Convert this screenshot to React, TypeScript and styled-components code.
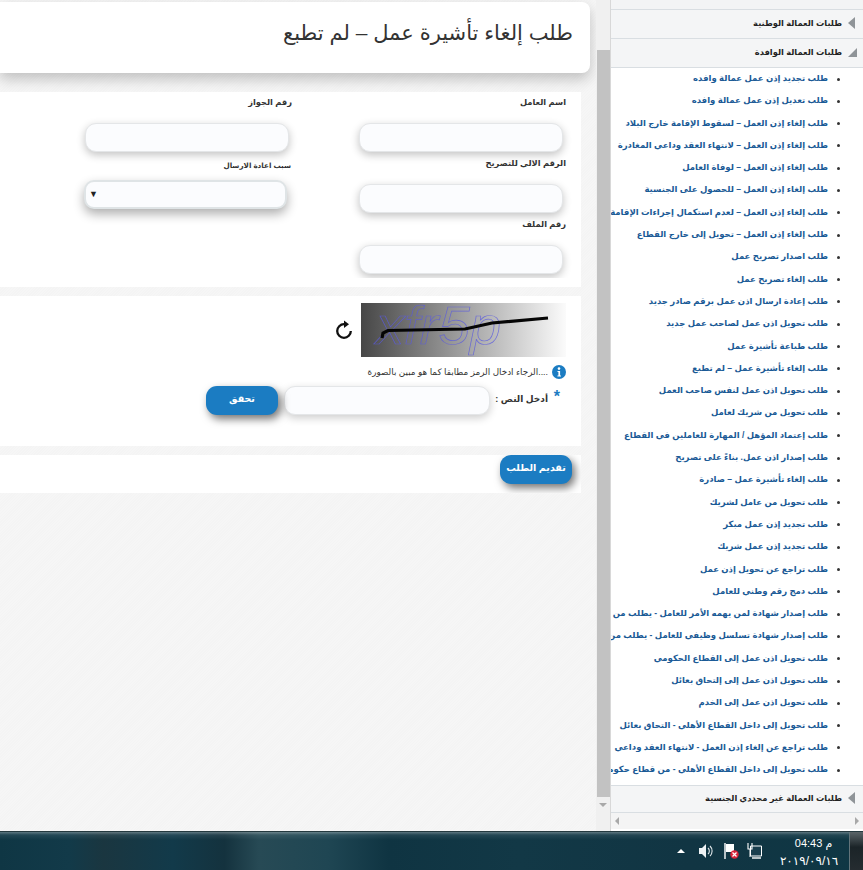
import React from "react";
import styled, { createGlobalStyle } from "styled-components";

const Global = createGlobalStyle`
  html, body { margin: 0; padding: 0; height: 100%; overflow: hidden; }
  body { font-family: "Liberation Sans", "DejaVu Sans", sans-serif; background: #f6f6f6; }
  * { box-sizing: border-box; }
`;

const Screen = styled.div`
  width: 863px; height: 870px; display: flex; flex-direction: column; overflow: hidden;
`;
const Workspace = styled.div`
  height: 831px; display: flex; flex-direction: row;
`;
const Content = styled.main`
  width: 596px; height: 831px; direction: rtl; padding: 2px 0 0 0; overflow: hidden;
  background: repeating-linear-gradient(135deg, #f6f6f6 0 1px, #f4f4f4 1px 2px);
`;
const TitleCard = styled.header`
  width: 590px; height: 71px; background: #fff; border-radius: 0 8px 8px 0;
  margin-inline-start: 6px; padding: 16px 17px 0 0;
  box-shadow: 0 6px 14px rgba(0,0,0,.22);
`;
const Title = styled.h1`
  margin: 0; font-size: 21px; line-height: 30px; font-weight: 400; color: #333;
`;
const Section = styled.section<{ $top: number; $height: number }>`
  width: 581px; margin-inline-start: 15px; margin-top: ${p => p.$top}px; height: ${p => p.$height}px;
  background: #fff; position: relative; overflow: hidden;
`;
const FormClip = styled.div`
  height: 186px; overflow: hidden; display: flex; flex-direction: row; padding: 0 15px 0 0;
`;
const Column = styled.div`
  width: 274px; flex: none; display: flex; flex-direction: column; padding-top: 3px;
`;
const Field = styled.div`
  height: 61.5px; display: flex; flex-direction: column;
`;
const Label = styled.label`
  display: block; height: 28px; font-size: 8.3px; font-weight: 700; line-height: 13px; color: #333;
  padding-top: 1px;
`;
const TextInput = styled.div`
  width: 204px; height: 29px; margin-inline-start: 3px; flex: none; background: #fbfcfe;
  border: 1px solid #e4e6e8; border-radius: 11px; box-shadow: 0 3px 8px rgba(0,0,0,.24);
`;
const SelectRow = styled.div`
  height: 60px; display: flex; flex-direction: column;
`;
const SmallLabel = styled.label`
  display: block; height: 23.5px; font-size: 7.2px; font-weight: 700; line-height: 13px; color: #333;
  padding: 2.5px 1px 0 0;
`;
const SelectBox = styled.div`
  width: 203px; height: 29px; margin-right: 5px; direction: ltr; background: #fbfcfe; border: 2px solid #dfe4e6;
  border-radius: 10px; box-shadow: 0 5px 11px rgba(0,0,0,.32); font-size: 9px; color: #222; padding: 5px 0 0 3px; line-height: 14px;
`;
const CaptchaBlock = styled.div`
  padding: 7px 15px 0 0; display: flex; flex-direction: column; align-items: flex-start;
`;
const CaptchaRow = styled.div`
  display: flex; align-items: center; gap: 8px; height: 54px;
`;
const CaptchaImage = styled.svg`
  width: 205px; height: 54px; display: block; direction: ltr;
`;
const RefreshIcon = styled.svg`
  width: 18px; height: 20px; flex: none;
`;
const InfoRow = styled.div`
  display: flex; align-items: center; gap: 4px; margin-top: 7px; height: 16px; font-size: 8.8px; color: #333;
`;
const InfoIcon = styled.svg`
  width: 14px; height: 14px; flex: none;
`;
const VerifyRow = styled.div`
  display: flex; align-items: flex-start; margin-top: 6px; height: 30px;
`;
const Star = styled.span`
  color: #1d7cc3; font-size: 16px; font-weight: 700; width: 8px; line-height: 22px; margin-inline: 6px 4px;
`;
const VerifyLabel = styled.span`
  font-size: 9px; font-weight: 700; color: #333; line-height: 15px; padding-top: 6px; width: 58px; white-space: nowrap; height: 22px;
`;
const VerifyInput = styled.div`
  width: 206px; height: 29px; background: #fbfcfe; border: 1px solid #e4e6e8; border-radius: 11px;
  box-shadow: 0 3px 9px rgba(0,0,0,.2);
`;
const BlueButton = styled.div<{ $w: number }>`
  width: ${p => p.$w}px; height: 29px; background: #1b7cc2; color: #fff; font-size: 9.5px; font-weight: 700; border-radius: 11px;
  text-align: center; line-height: 26px; box-shadow: 3px 4px 8px rgba(0,0,0,.55);
`;
const SubmitWrap = styled.div`
  padding-inline-start: 9px; height: 29px;
`;
const VerifyButton = styled(BlueButton)`
  margin-inline-start: 6px;
`;
const ScrollBar = styled.div`
  width: 15px; height: 831px; background: #f0f0f0; display: flex; flex-direction: column; border-right: 1px solid #d8d8d8;
  padding-top: 50px; align-items: center;
`;
const Thumb = styled.div`
  width: 13px; height: 747px; background: #c2c2c2;
`;
const DownArrow = styled.div`
  margin-top: 6px; width: 0; height: 0; border-left: 4px solid transparent; border-right: 4px solid transparent; border-top: 4px solid #a8a8a8;
`;
const Sidebar = styled.aside`
  width: 252px; height: 831px; background: #fff; direction: rtl; display: flex; flex-direction: column; overflow: hidden;
`;
const TopStub = styled.div`
  height: 10px; background: #f3f4f5; border-bottom: 1px solid #d9dee2;
`;
const AccordionHead = styled.div<{ $h: number }>`
  height: ${p => p.$h}px; flex: none; background: #f4f5f6; border-bottom: 1px solid #d9dee2; display: flex; align-items: center;
  padding: 0 6px 3px 0; gap: 5px; font-size: 8.3px; font-weight: 700; color: #222;
`;
const Triangle = styled.svg`
  width: 10px; height: 14px; flex: none;
`;
const List = styled.ul`
  flex: none; height: 718px; margin: 0; padding: 0 35px 0 0; list-style: none; overflow: hidden; border-bottom: 1px solid #d9dee2;
`;
const Item = styled.li`
  position: relative; height: 22.3px; line-height: 20.3px; white-space: nowrap; font-size: 8.5px; font-weight: 700; color: #1a5a96;
  &::before { content: ""; position: absolute; right: -12px; top: 9.5px; width: 3px; height: 3px; border-radius: 50%; background: #333; }
`;
const HScroll = styled.div`
  height: 16px; flex: none; background: #f4f4f4; display: flex; direction: ltr; align-items: center; justify-content: space-between; padding: 0 4px;
`;
const ArrowL = styled.div`
  width: 0; height: 0; border-top: 4px solid transparent; border-bottom: 4px solid transparent; border-right: 4px solid #a8a8a8;
`;
const ArrowR = styled.div`
  width: 0; height: 0; border-top: 4px solid transparent; border-bottom: 4px solid transparent; border-left: 4px solid #a8a8a8;
`;
const Taskbar = styled.footer`
  height: 39px; display: flex; justify-content: flex-end; align-items: center;
  border-top: 1px solid #24393f;
  background:
    linear-gradient(180deg, rgba(255,255,255,.32) 0, rgba(255,255,255,.08) 3px, rgba(255,255,255,0) 8px),
    linear-gradient(90deg, #0f3644 0, #123a49 8%, #1a3640 12%, #123a4a 20%, #14323e 26%, #274a55 30%, #1f4653 38%, #0f3442 45%, #123846 60%, #113543 80%, #0f3744 100%);
`;
const Tray = styled.div`
  display: flex; align-items: center; color: #fff; height: 38px;
`;
const TrayGlyph = styled.svg<{ $w: number; $m: number }>`
  width: ${p => p.$w}px; height: 20px; margin-right: ${p => p.$m}px; flex: none;
`;
const Clock = styled.div`
  width: 85px; color: #fff; text-align: center; padding: 3px 0 0 5px; direction: ltr;
`;
const ClockTime = styled.div`
  font-size: 11px; line-height: 17px; padding-left: 9px;
`;
const ClockDate = styled.div`
  font-size: 12px; line-height: 18px;
`;
const ShowDesktop = styled.div`
  width: 14px; height: 38px; border-left: 1px solid #62747a;
  background: linear-gradient(180deg, #5a6468, #1b2428 40%, #252c30);
`;

const items = [
  "طلب تجديد إذن عمل عمالة وافده",
  "طلب تعديل إذن عمل عمالة وافده",
  "طلب إلغاء إذن العمل – لسقوط الإقامة خارج البلاد",
  "طلب إلغاء إذن العمل – لانتهاء العقد وداعي المغادرة",
  "طلب إلغاء إذن العمل – لوفاة العامل",
  "طلب إلغاء إذن العمل – للحصول على الجنسية",
  "طلب إلغاء إذن العمل – لعدم استكمال إجراءات الإقامة",
  "طلب إلغاء إذن العمل – تحويل إلى خارج القطاع",
  "طلب اصدار تصريح عمل",
  "طلب إلغاء تصريح عمل",
  "طلب إعادة ارسال اذن عمل برقم صادر جديد",
  "طلب تحويل اذن عمل لصاحب عمل جديد",
  "طلب طباعة تأشيرة عمل",
  "طلب إلغاء تأشيرة عمل – لم تطبع",
  "طلب تحويل اذن عمل لنفس صاحب العمل",
  "طلب تحويل من شريك لعامل",
  "طلب إعتماد المؤهل / المهارة للعاملين في القطاع",
  "طلب إصدار اذن عمل. بناءً على تصريح",
  "طلب إلغاء تأشيرة عمل – صادرة",
  "طلب تحويل من عامل لشريك",
  "طلب تجديد إذن عمل مبكر",
  "طلب تجديد إذن عمل شريك",
  "طلب تراجع عن تحويل إذن عمل",
  "طلب دمج رقم وطني للعامل",
  "طلب إصدار شهادة لمن يهمه الأمر للعامل - يطلب من",
  "طلب إصدار شهادة تسلسل وظيفي للعامل - يطلب من",
  "طلب تحويل اذن عمل إلى القطاع الحكومي",
  "طلب تحويل اذن عمل إلى إلتحاق بعائل",
  "طلب تحويل اذن عمل إلى الخدم",
  "طلب تحويل إلى داخل القطاع الأهلي - التحاق بعائل",
  "طلب تراجع عن إلغاء إذن العمل - لانتهاء العقد وداعي",
  "طلب تحويل إلى داخل القطاع الأهلي - من قطاع حكومي",
];

const Collapsed = () => (
  <Triangle viewBox="0 0 10 14"><path d="M8 1v12L1 7z" fill="#8f9498" /></Triangle>
);
const Open = () => (
  <Triangle viewBox="0 0 10 14"><path d="M10 3v9H1z" fill="#8f9498" /></Triangle>
);

export default function App() {
  return (
    <Screen>
      <Global />
      <Workspace>
        <Content>
          <TitleCard>
            <Title>طلب إلغاء تأشيرة عمل – لم تطبع</Title>
          </TitleCard>
          <Section $top={19} $height={195}>
            <FormClip>
              <Column>
                <Field><Label>اسم العامل</Label><TextInput /></Field>
                <Field><Label>الرقم الالي للتصريح</Label><TextInput /></Field>
                <Field><Label>رقم الملف</Label><TextInput /></Field>
              </Column>
              <Column>
                <Field><Label>رقم الجواز</Label><TextInput /></Field>
                <SelectRow>
                  <SmallLabel>سبب اعادة الارسال</SmallLabel>
                  <SelectBox>▼</SelectBox>
                </SelectRow>
              </Column>
            </FormClip>
          </Section>
          <Section $top={9} $height={150}>
            <CaptchaBlock>
              <CaptchaRow>
                <CaptchaImage viewBox="0 0 205 54">
                  <defs>
                    <linearGradient id="cg" x1="0" x2="1" y1="0" y2="0">
                      <stop offset="0" stopColor="#474747" />
                      <stop offset="1" stopColor="#fbfbfb" />
                    </linearGradient>
                  </defs>
                  <rect width="205" height="54" fill="url(#cg)" />
                  <text x="15" y="41" fontFamily="Liberation Sans" fontStyle="italic" fontSize="54" fill="none" stroke="#5a5ae0" strokeOpacity=".8" strokeWidth=".7" textLength="125" lengthAdjust="spacingAndGlyphs">xfr5p</text>
                  <path d="M21 35l1-5 5-2.5 77-1.5 27-6 56-5" fill="none" stroke="#050505" strokeWidth="3.2" />
                </CaptchaImage>
                <RefreshIcon viewBox="0 0 18 20">
                  <path d="M9 4.2A6.8 6.8 0 1 0 15.8 11" fill="none" stroke="#111" strokeWidth="2.3" />
                  <path d="M9 .5v7.6l5-3.8z" fill="#111" />
                </RefreshIcon>
              </CaptchaRow>
              <InfoRow>
                <InfoIcon viewBox="0 0 14 14">
                  <circle cx="7" cy="7" r="7" fill="#1b7cc2" />
                  <circle cx="7" cy="3.6" r="1.3" fill="#fff" />
                  <path d="M5.5 6h2.6v4.6H9V11.5H5.4v-.9h1V6.9h-.9z" fill="#fff" />
                </InfoIcon>
                ....الرجاء ادخال الرمز مطابقا كما هو مبين بالصورة
              </InfoRow>
              <VerifyRow>
                <Star>*</Star>
                <VerifyLabel>أدخل النص :</VerifyLabel>
                <VerifyInput />
                <VerifyButton $w={72}>تحقق</VerifyButton>
              </VerifyRow>
            </CaptchaBlock>
          </Section>
          <Section $top={9} $height={38}>
            <SubmitWrap><BlueButton $w={72}>تقديم الطلب</BlueButton></SubmitWrap>
          </Section>
        </Content>
        <ScrollBar>
          <Thumb />
          <DownArrow />
        </ScrollBar>
        <Sidebar>
          <TopStub />
          <AccordionHead $h={29}><Collapsed />طلبات العمالة الوطنية</AccordionHead>
          <AccordionHead $h={29}><Open />طلبات العمالة الوافدة</AccordionHead>
          <List>
            {items.map(t => <Item key={t}>{t}</Item>)}
          </List>
          <AccordionHead $h={27}><Collapsed />طلبات العمالة غير محددي الجنسية</AccordionHead>
          <HScroll><ArrowL /><ArrowR /></HScroll>
        </Sidebar>
      </Workspace>
      <Taskbar>
        <Tray>
          <TrayGlyph $w={8} $m={14} viewBox="0 0 8 20"><path d="M0 12l4-4 4 4z" fill="#fff" /></TrayGlyph>
          <TrayGlyph $w={14} $m={11} viewBox="0 0 14 20"><path d="M0 7h3l4-4v14l-4-4H0z" fill="#eef2f4" /><path d="M9 7a4 4 0 0 1 0 6M11 5a7 7 0 0 1 0 10" fill="none" stroke="#dfe6e9" strokeWidth="1.1" /></TrayGlyph>
          <TrayGlyph $w={15} $m={8} viewBox="0 0 15 20"><path d="M1 2v16" stroke="#fff" strokeWidth="1.4" /><path d="M2 3h8v8H2z" fill="#fff" /><circle cx="10.5" cy="13.5" r="4.2" fill="#d9243a" /><path d="M8.5 11.5l4 4m0-4l-4 4" stroke="#fff" strokeWidth="1.2" /></TrayGlyph>
          <TrayGlyph $w={15} $m={2} viewBox="0 0 15 20"><path d="M3.5 5h11v10h-11z" fill="#1a3f4e" stroke="#fff" /><path d="M5 17h9" stroke="#fff" strokeWidth="1.4" /><path d="M1 2v6h4V2" fill="none" stroke="#fff" strokeWidth="1.1" /><path d="M3 8v8" stroke="#fff" /></TrayGlyph>
          <Clock>
            <ClockTime dir="rtl">م 04:43</ClockTime>
            <ClockDate>٢٠١٩/٠٩/١٦</ClockDate>
          </Clock>
          <ShowDesktop />
        </Tray>
      </Taskbar>
    </Screen>
  );
}
